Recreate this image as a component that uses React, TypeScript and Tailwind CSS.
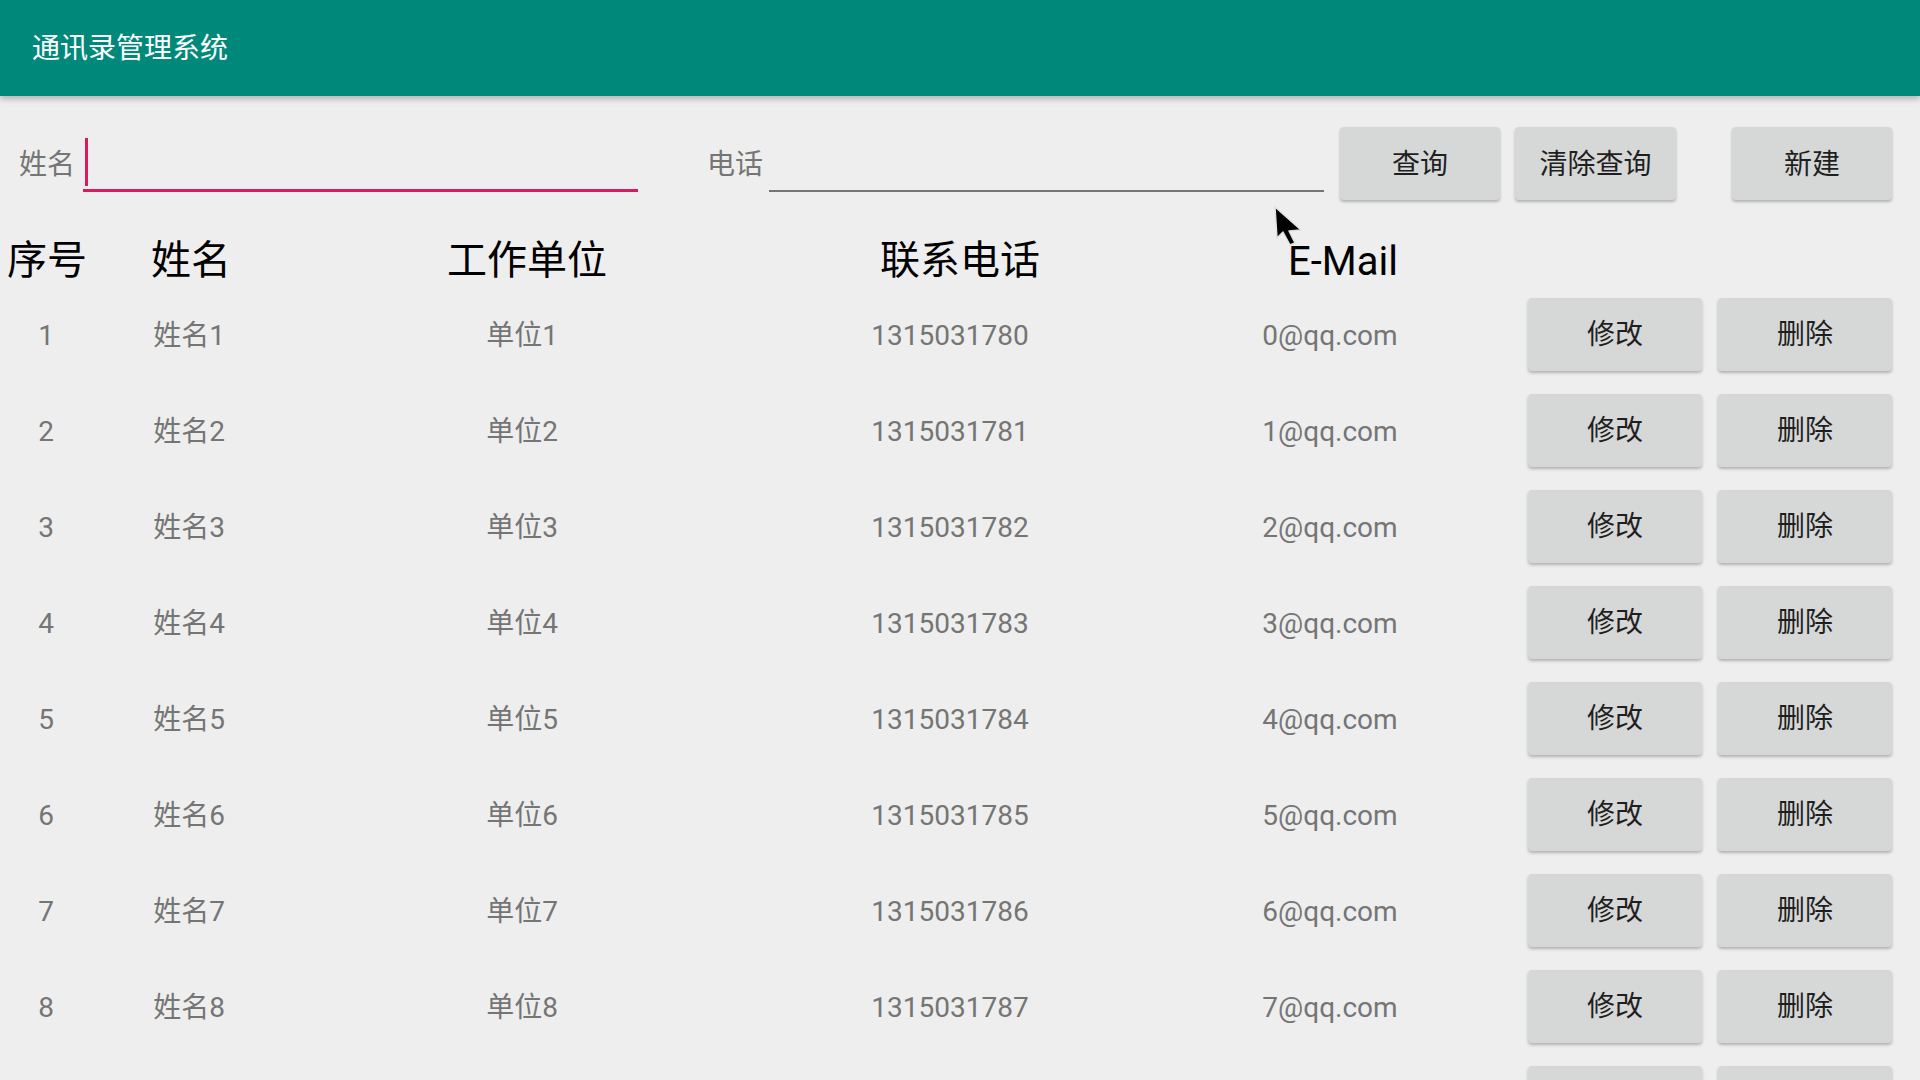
import React from 'react'

const font = { fontFamily: 'Roboto, "Noto Sans CJK SC", sans-serif' }

const rows = Array.from({ length: 9 }, (_, i) => ({
  no: i + 1,
  name: `姓名${i + 1}`,
  unit: `单位${i + 1}`,
  phone: `131503178${i}`,
  email: `${i}@qq.com`,
}))

function GrayButton({ label, className }: { label: string; className: string }) {
  return (
    <button
      className={`h-[73px] rounded-[4px] bg-[#d6d7d7] pt-[2px] text-[28px] leading-none text-[#1f1f1f] shadow-[0_2px_3px_rgba(0,0,0,0.25)] ${className}`}
    >
      {label}
    </button>
  )
}

export default function App() {
  return (
    <div className="relative h-[1080px] w-[1920px] overflow-hidden bg-[#eeeeee]" style={font}>
      {/* Toolbar */}
      <header className="relative z-10 flex h-[96px] items-center bg-[#00897b] pl-[32px] pt-[2px] shadow-[0_3px_6px_rgba(0,0,0,0.25)]">
        <h1 className="text-[28px] leading-none text-white">通讯录管理系统</h1>
      </header>

      {/* Search bar */}
      <div className="flex items-center pt-[31px] pr-[28px]">
        <div className="flex h-[73px] items-center pl-[19px]">
          <span className="pt-[3px] text-[28px] leading-none text-[#757575]">姓名</span>
          <div className="ml-[8px] flex h-[56px] w-[555px] items-start border-b-[3px] border-[#d81b60] pt-[2px]">
            <div className="ml-[2px] h-[48px] w-[3px] bg-[#d81b60]" />
          </div>
        </div>
        <div className="ml-[69px] flex h-[73px] items-center">
          <span className="pt-[3px] text-[28px] leading-none text-[#757575]">电话</span>
          <div className="ml-[6px] h-[56px] w-[555px] border-b-2 border-[#757575]" />
        </div>
        <GrayButton label="查询" className="ml-[16px] w-[160px]" />
        <GrayButton label="清除查询" className="ml-[15px] w-[161px]" />
        <GrayButton label="新建" className="ml-[56px] w-[160px]" />
      </div>

      {/* Table header */}
      <div className="grid h-[86px] grid-cols-[94px_194px_478px_388px_378px] items-center pt-[36px] text-center text-[40px] leading-none text-black">
        <span>序号</span>
        <span>姓名</span>
        <span>工作单位</span>
        <span>联系电话</span>
        <span className="pt-[2px]">E-Mail</span>
      </div>

      {/* Rows */}
      {rows.map((r) => (
        <div key={r.no} className="flex h-[96px] items-center">
          <div className="grid grid-cols-[92px_194px_472px_384px_376px] pt-[3px] text-center text-[28px] leading-none text-[#757575]">
            <span>{r.no}</span>
            <span>{r.name}</span>
            <span>{r.unit}</span>
            <span>{r.phone}</span>
            <span>{r.email}</span>
          </div>
          <GrayButton label="修改" className="ml-[10px] w-[174px]" />
          <GrayButton label="删除" className="ml-[16px] w-[174px]" />
        </div>
      ))}

      {/* Mouse pointer */}
      <svg className="absolute left-[1272px] top-[204px] z-20" width="32" height="44" viewBox="0 0 32 44">
        <path
          d="M3 3 L5 34 L11 28 L18 41 L23 39 L17 27 L29 26 Z"
          fill="#000"
          stroke="#e0e0e0"
          strokeWidth="1.5"
          strokeLinejoin="round"
        />
      </svg>
    </div>
  )
}
